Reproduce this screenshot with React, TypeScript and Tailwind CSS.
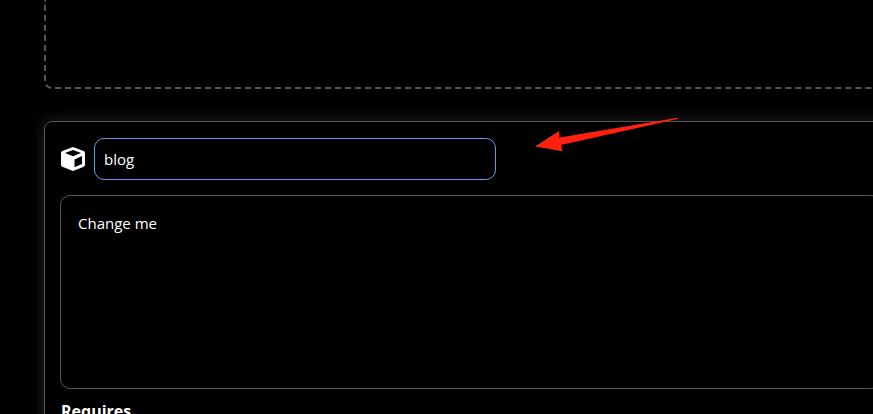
import { useState } from 'react';

function CubeIcon() {
  return (
    <svg viewBox="0 0 24 24" className="size-6 shrink-0 text-white" fill="currentColor" fillRule="evenodd" aria-hidden="true">
      <path d="M12 0 L22.6 4 Q24 4.6 24 6 V17.8 Q24 19.1 22.7 19.7 L12 24 L1.3 19.7 Q0 19.1 0 17.8 V6 Q0 4.6 1.4 4 Z M12 3 L4 6 L12 9.2 L20 6 Z M13.5 12.4 V20.2 L21 17 V9 Z" />
    </svg>
  );
}

function Arrow() {
  return (
    <svg viewBox="0 0 144 34" className="pointer-events-none absolute -top-1 left-[490px] h-[34px] w-36" fill="#ff2010" aria-hidden="true">
      <path d="M0 28.5 L24 13 L24.5 19.5 L143 -0.3 L143.5 0.7 L26 27 L27.5 33.2 Z" />
    </svg>
  );
}

export default function App() {
  const [name, setName] = useState('blog');
  const [description, setDescription] = useState('Change me');

  return (
    <main className="h-screen overflow-hidden bg-black pl-11 font-['Open_Sans','Noto_Sans',sans-serif] text-white">
      <div className="-mr-6 flex flex-col gap-8">
        <section className="h-[89px] rounded-b-lg border-2 border-t-0 border-dashed border-[#555555]" />

        <section className="relative flex flex-col rounded-lg border border-[#555555] px-[15px] pt-4 pb-20 shadow-[0_0_16px_rgba(255,255,255,0.14)]">
          <div className="mb-[15px] flex items-center gap-[9px] pl-px">
            <CubeIcon />
            <input
              type="text"
              aria-label="Name"
              value={name}
              onChange={(e) => setName(e.target.value)}
              className="h-[42px] w-[402px] rounded-[10px] border border-[#6c96f0] bg-black px-[9px] text-[15px] outline-none"
            />
          </div>
          <textarea
            aria-label="Description"
            value={description}
            onChange={(e) => setDescription(e.target.value)}
            className="h-[194px] w-full resize-none rounded-[10px] border border-[#555555] bg-black px-[17px] py-[15px] text-[15px] leading-6 outline-none"
          />
          <h3 className="mt-[10px] pl-px text-base font-bold">Requires</h3>
          <Arrow />
        </section>
      </div>
    </main>
  );
}
